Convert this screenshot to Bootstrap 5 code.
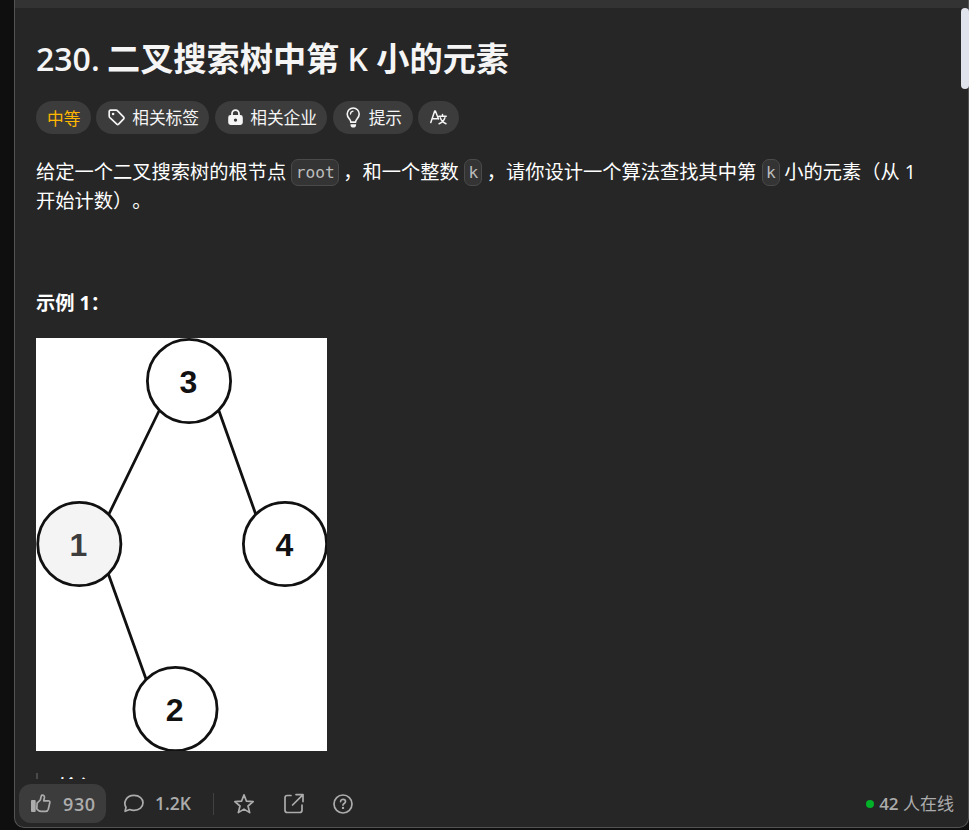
<!DOCTYPE html>
<html lang="zh-CN">
<head>
<meta charset="utf-8">
<meta name="viewport" content="width=device-width, initial-scale=1">
<title>230. 二叉搜索树中第 K 小的元素</title>
<link href="https://cdn.jsdelivr.net/npm/bootstrap@5.3.0/dist/css/bootstrap.min.css" rel="stylesheet">
<style>
body{background:#0f0f0f;font-family:"Open Sans","Noto Sans CJK SC",sans-serif;color:#fff}
.problem-panel{height:828px;margin-left:14px;border:1px solid #535353;border-top:0;border-radius:0 0 10px 10px;background:#262626}
.top-strip{height:8px;background:#333}
.content-area{height:771px;padding:0 21px}
.problem-title{margin:31px 0 0;height:40px;line-height:40px;font-size:33.2px;font-weight:700;color:#f5f5f5}
.problem-title .latin{font-weight:600;display:inline-block}
.title-num{width:71px;font-size:32px}
.title-k{width:37px;font-size:32px;text-align:center}
.tag-row{margin-top:22px;height:33px}
.chip{height:33px;border-radius:17px;background:#3c3c3c;font-size:16.7px;line-height:35px;padding:0 11px;color:#f5f5f5}
.chip svg{flex:none}
.chip-level{width:55px;color:#ffb700}
.chip-tags{width:113px;margin-left:5px;padding-right:10px}
.chip-firms{width:112px;margin-left:6px;padding-right:10px}
.chip-hint{width:80px;margin-left:6px}
.chip-lang{width:41px;margin-left:5px}
.description{margin:23px 0 0;font-size:19.25px;line-height:29px;font-kerning:none;font-feature-settings:"chws" 0,"halt" 0;text-spacing-trim:space-all}
.token{display:inline-block;height:27px;border:1px solid #4a4a4a;border-radius:7px;background:#343434;color:#bdbdbd;font:16.2px/25px "DejaVu Sans Mono",monospace;text-align:center;vertical-align:1px;padding:0}
.token-root{width:48px;margin:0 4px 0 5px}
.token-k{width:18px;margin:0 4.5px 0 5.5px}
.example-label{margin:73px 0 0;font-size:19.25px;line-height:30px;font-weight:700}
.tree-figure{display:block;margin-top:20px}
.example-io{margin-top:22px;border-left:2px solid #4a4a4a;padding-left:21px;font-size:18px;font-weight:700;line-height:26px;height:70px}
.action-bar{height:48px;padding:5px 14px 4px 4px;color:#acacac;font-size:17px;font-weight:600}
.like-btn{width:87px;height:39px;border-radius:12px;background:#3c3c3c;padding:0 10px 0 11px}
.like-count{font-size:18px;font-weight:600;letter-spacing:.6px;width:33px;line-height:24px}
.reply-link{margin-left:17px}
.reply-count{font-size:17.5px;font-weight:600;width:37px;margin-left:10px}
.bar-rule{width:1px;height:22px;background:#414141;margin:0 19px 0 21px}
.share-icon{margin-left:25px}
.online-dot{width:8px;height:8px;background:#02b128;margin-right:5px}
.scroll-thumb{right:0;top:8px;width:8px;height:81px;border-radius:4px;background:#e0e2ec}
</style>
</head>
<body class="overflow-hidden">
<main class="problem-panel overflow-hidden d-flex flex-column">
  <div class="top-strip flex-shrink-0"></div>
  <section class="content-area overflow-hidden flex-shrink-0">
    <h1 class="problem-title text-nowrap"><span class="latin title-num">230.</span>二叉搜索树中第<span class="latin title-k">K</span>小的元素</h1>
    <div class="tag-row d-flex align-items-center text-nowrap">
      <span class="chip chip-level">中等</span>
      <span class="chip chip-tags d-flex align-items-center justify-content-between">
        <svg width="19" height="19" viewBox="0 0 19 19" fill="none" stroke="currentColor" stroke-width="1.7" stroke-linejoin="round"><path d="M2.2 3.6Q2.2 2.2 3.6 2.2L9.2 2.2Q10 2.2 10.6 2.8L16.7 9.1Q17.5 10 16.7 10.8L11.6 16.2Q10.7 17 9.8 16.1L2.9 9.7Q2.2 9 2.2 8.2Z"/><circle cx="6.1" cy="6" r="1.3" fill="currentColor" stroke="none"/></svg>
        <span>相关标签</span></span>
      <span class="chip chip-firms d-flex align-items-center justify-content-between">
        <svg width="19" height="19" viewBox="0 0 19 19"><path d="M6 8V5.7a3.5 3.5 0 0 1 7 0V8" fill="none" stroke="currentColor" stroke-width="1.8"/><path fill="currentColor" fill-rule="evenodd" d="M4.6 7h9.8a2.4 2.4 0 0 1 2.4 2.4v5.2a2.4 2.4 0 0 1-2.4 2.4H4.6a2.4 2.4 0 0 1-2.4-2.4V9.4A2.4 2.4 0 0 1 4.6 7ZM9.5 10.4a1.7 1.7 0 1 0 0 3.4 1.7 1.7 0 0 0 0-3.4Z"/></svg>
        <span>相关企业</span></span>
      <span class="chip chip-hint d-flex align-items-center justify-content-between">
        <svg width="19" height="21" viewBox="0 0 19 21" fill="none" stroke="currentColor" stroke-width="1.6" stroke-linecap="round"><path d="M6.9 15.1C6.7 12.2 3.2 11 3.2 7a6 6 0 0 1 12 0c0 4-3.4 5.2-3.7 8.1Z"/><path d="M6.5 7a3 3 0 0 1 2.5-2.8" stroke-width="1.3"/><path d="M6.5 17.2h5.6c0 3-1.2 3.3-2.8 3.3s-2.8-.4-2.8-3.3Z" fill="currentColor" stroke="none"/></svg>
        <span>提示</span></span>
      <span class="chip chip-lang d-flex align-items-center">
        <svg width="19" height="19" viewBox="0 0 19 19" fill="none" stroke="currentColor" stroke-width="1.5" stroke-linecap="round" stroke-linejoin="round"><path d="M1.8 14.5 5.7 3h.7l3.1 8.1M3.2 10.7h5M9.9 8.3h7.3M13.5 6.4v1.9M11.3 9.7C12.2 12.5 14.2 14.5 17 15.7M15.9 9.7c-.9 2.9-3 4.9-5.8 6"/></svg></span>
    </div>
    <p class="description text-nowrap">给定一个二叉搜索树的根节点<code class="token token-root">root</code>，和一个整数<code class="token token-k">k</code>，请你设计一个算法查找其中第<code class="token token-k">k</code>小的元素（从 1<br>开始计数）。</p>
    <p class="example-label">示例 1：</p>
    <svg class="tree-figure" width="291" height="413" viewBox="0 0 291 413">
      <rect width="291" height="413" fill="#fff"/>
      <g stroke="#111" stroke-width="2.8" fill="#fff">
        <path d="M123 73 72 178M183 73l37 104M72 235l38 106"/>
        <circle cx="153" cy="43" r="41.6"/><circle cx="43.3" cy="206" r="41.6" fill="#f4f4f4"/><circle cx="249" cy="206" r="41.6"/><circle cx="139.5" cy="371" r="41.6"/>
      </g>
      <g font-family="Liberation Sans" font-weight="700" font-size="32" text-anchor="middle" fill="#111"><text x="152.5" y="54.5">3</text><text x="42.5" y="218" fill="#3d3d3d">1</text><text x="248.5" y="218">4</text><text x="138.7" y="382.5">2</text></g>
    </svg>
    <div class="example-io">输入：</div>
  </section>
  <footer class="action-bar d-flex align-items-center text-nowrap flex-shrink-0">
    <span class="like-btn d-flex align-items-center justify-content-between">
      <svg width="21" height="21" viewBox="0 0 21 21"><rect x="1" y="7" width="4.7" height="12" rx="1" fill="currentColor"/><path d="M7.1 10.2 10.3 7l1-4.1q.3-1 1.3-.8c1.7.3 2 1.6 1.8 2.6l-.7 3.1h4.5q2 0 1.6 1.9l-1.5 6.5q-.6 2.1-2.7 2.1h-4.3q-2 0-3-1l-1.5-1.5Z" fill="none" stroke="currentColor" stroke-width="1.7" stroke-linejoin="round"/></svg>
      <span class="like-count">930</span></span>
    <span class="reply-link d-flex align-items-center">
      <svg width="22" height="21" viewBox="0 0 22 21" fill="none" stroke="currentColor" stroke-width="1.7" stroke-linejoin="round"><path d="M2.1 18.3 3 14.2C.4 10.2 2.4 2.4 11 2.4c5.5 0 9 3.3 9 7.4s-3.6 7.5-9 7.5q-2.5 0-4.3-.8Z"/></svg>
      <span class="reply-count">1.2K</span></span>
    <span class="bar-rule"></span>
    <svg width="22" height="22" viewBox="0 0 22 22" fill="none" stroke="currentColor" stroke-width="1.7" stroke-linejoin="round"><path d="m11 1.9 2.5 6.3 6.7.5-5.2 4.3 1.7 6.6-5.7-3.5-5.7 3.5L7 13 1.8 8.7l6.7-.5Z"/></svg>
    <svg class="share-icon" width="28" height="22" viewBox="0 0 24 22" fill="none" stroke="currentColor" stroke-width="1.7" stroke-linecap="round" stroke-linejoin="round"><path d="M9 2.5H5.3Q3 2.5 3 4.8v12.4q0 2.3 2.3 2.3h12.4q2.3 0 2.3-2.3V12M14 1.6h7v7M20.8 1.8 10.6 12"/></svg>
    <svg class="ms-4" width="22" height="22" viewBox="0 0 22 22" fill="none" stroke="currentColor" stroke-width="1.7" stroke-linecap="round"><circle cx="11" cy="11" r="9"/><path d="M8.6 8.6c0-3 4.9-2.9 4.9 0 0 2.1-2.5 1.7-2.5 3.5"/><circle cx="11" cy="14.9" r="1.2" fill="currentColor" stroke="none"/></svg>
    <span class="ms-auto d-flex align-items-center"><i class="online-dot rounded-circle"></i><span>42 <span class="fw-normal">人在线</span></span></span>
  </footer>
</main>
<div class="scroll-thumb position-absolute"></div>
<script src="https://cdn.jsdelivr.net/npm/bootstrap@5.3.0/dist/js/bootstrap.bundle.min.js"></script>
</body>
</html>
